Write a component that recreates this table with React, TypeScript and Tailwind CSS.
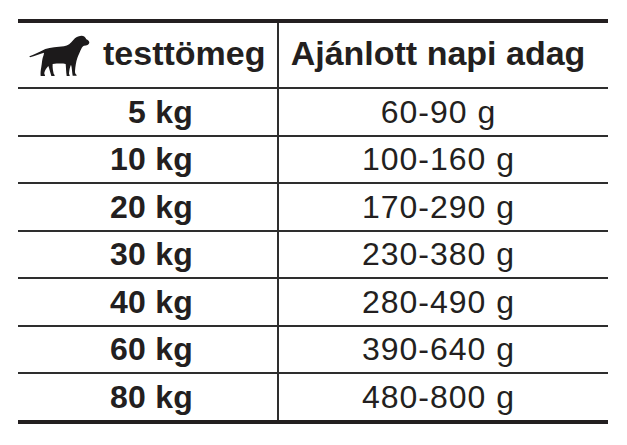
const rows = [
  { weight: "5 kg", portion: "60-90 g" },
  { weight: "10 kg", portion: "100-160 g" },
  { weight: "20 kg", portion: "170-290 g" },
  { weight: "30 kg", portion: "230-380 g" },
  { weight: "40 kg", portion: "280-490 g" },
  { weight: "60 kg", portion: "390-640 g" },
  { weight: "80 kg", portion: "480-800 g" },
];

const Dog = () => (
  <svg viewBox="0 0 240 180" className="w-[80px] h-[60px] shrink-0" fill="#1c1a1b">
    <path d="M28 79 C40 74 58 67 76 57 C92 53 112 51 132 49 C144 47 152 40 160 30 C166 22 174 18 184 17 C192 17 197 22 199 28 C203 30 208 33 208 38 C207 44 200 46 192 47 C188 48 186 52 184 56 C180 64 176 74 172 84 C168 96 166 110 165 124 C165 130 166 133 170 135 C171 138 164 138 158 137 C156 126 156 112 153 104 C150 110 148 120 147 130 C147 134 150 136 149 138 L140 138 C138 124 138 112 137 102 C126 100 112 101 98 102 C97 112 99 122 101 131 C103 134 106 136 103 138 L94 138 C90 126 88 116 85 108 C80 114 75 120 73 128 C72 132 76 135 75 138 L62 138 C61 130 62 120 64 110 C66 100 66 92 68 84 C70 78 72 72 72 68 C60 72 44 78 30 82 Z" />
    <path d="M170 24 C176 32 180 44 181 58 C178 60 175 56 173 50 C171 42 168 32 170 24 Z" />
  </svg>
);

export default function App() {
  return (
    <div
      className="w-[627px] h-[445px] bg-white pt-[19px] pl-[18px] text-[#231f20]"
      style={{ fontFamily: '"Liberation Sans", Arial, sans-serif' }}
    >
      <div className="w-[590px] border-t-4 border-b-4 border-[#231f20]">
        {/* header */}
        <div className="grid grid-cols-[261px_329px] h-[66px] border-b-2 border-[#2e2e2e]">
          <div className="flex border-r-2 border-[#2e2e2e] pl-[2px]">
            <div className="mt-[7px]">
              <Dog />
            </div>
            <div className="flex items-center pb-[8px] ml-[3px] text-[34px] leading-[34px] font-bold">
              testtömeg
            </div>
          </div>
          <div className="flex items-center justify-center pb-[8px] pr-[11px] text-[34px] leading-[34px] font-bold">
            Ajánlott napi adag
          </div>
        </div>

        {rows.map((r, i) => (
          <div
            key={r.weight}
            className={
              i < rows.length - 1
                ? "grid grid-cols-[261px_329px] h-[47.5px] border-b-2 border-[#2e2e2e]"
                : "grid grid-cols-[261px_329px] h-[45.5px]"
            }
          >
            <div className="flex items-center justify-end pr-[84px] border-r-2 border-[#2e2e2e] text-[32px] leading-[32px] font-bold tracking-[0.25px]">
              {r.weight}
            </div>
            <div className="flex items-center justify-center pr-[10px] text-[32px] leading-[32px] tracking-[1px]">
              {r.portion}
            </div>
          </div>
        ))}
      </div>
    </div>
  );
}
